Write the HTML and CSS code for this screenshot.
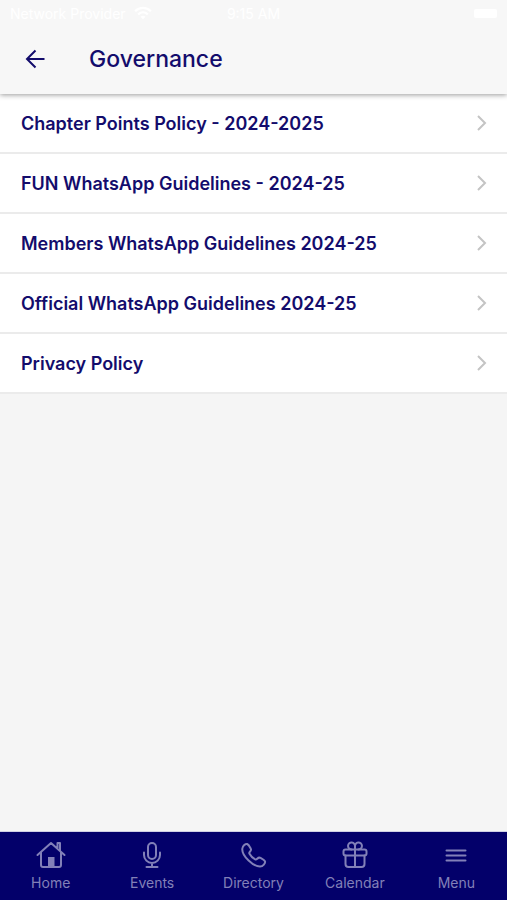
FILE: index.html
```
<!DOCTYPE html>
<html lang="en">

<head>
  <meta charset="UTF-8" />
  <meta name="viewport" content="width=device-width, initial-scale=1.0" />
  <title>Governance</title>
  <link rel="stylesheet" href="styles.css">
</head>

<body>
  <header class="header">
    <div class="status">
      <div class="carrier">
        <span>Network Provider</span>
        <svg width="18" height="14" viewBox="0 0 16 12" fill="none" stroke="currentColor" stroke-width="2">
          <path d="M1 4.5c4-4 10-4 14 0M3.700 7.300c2.500-2.400 6.100-2.400 8.600 0" />
          <path d="M8 11.500 5.800 9.300c1.300-1 3.100-1 4.400 0z" fill="currentColor" stroke="none" />
        </svg>
      </div>
      <span class="time">9:15 AM</span>
      <span class="battery"></span>
    </div>
    <div class="toolbar">
      <button class="back" type="button" aria-label="Back">
        <svg width="20" height="20" viewBox="0 0 20 20">
          <path d="M19.500 10H2M10.500 1.500 2 10l8.500 8.500" />
        </svg>
      </button>
      <h1 class="title">Governance</h1>
    </div>
  </header>

  <main class="content">
    <ul class="list">
      <li>
        <a class="item" href="#">
          <span>Chapter Points Policy - 2024-2025</span>
          <svg class="chevron" width="10" height="16" viewBox="0 0 10 16"><path d="M1 1 8 8l-7 7" /></svg>
        </a>
      </li>
      <li>
        <a class="item" href="#">
          <span>FUN WhatsApp Guidelines - 2024-25</span>
          <svg class="chevron" width="10" height="16" viewBox="0 0 10 16"><path d="M1 1 8 8l-7 7" /></svg>
        </a>
      </li>
      <li>
        <a class="item" href="#">
          <span>Members WhatsApp Guidelines 2024-25</span>
          <svg class="chevron" width="10" height="16" viewBox="0 0 10 16"><path d="M1 1 8 8l-7 7" /></svg>
        </a>
      </li>
      <li>
        <a class="item" href="#">
          <span>Official WhatsApp Guidelines 2024-25</span>
          <svg class="chevron" width="10" height="16" viewBox="0 0 10 16"><path d="M1 1 8 8l-7 7" /></svg>
        </a>
      </li>
      <li>
        <a class="item" href="#">
          <span>Privacy Policy</span>
          <svg class="chevron" width="10" height="16" viewBox="0 0 10 16"><path d="M1 1 8 8l-7 7" /></svg>
        </a>
      </li>
    </ul>
  </main>

  <nav class="tabs">
    <a class="tab" href="#">
      <svg width="30" height="28" viewBox="0 0 30 28">
        <path d="M1.500 14 15 2l13.500 12M5 11.500V24q0 2 2 2h16q2 0 2-2V11.500M21.500 7V2H24v7.500" />
        <path class="solid" d="M12 16h6.500v10H12z" />
      </svg>
      <span>Home</span>
    </a>
    <a class="tab" href="#">
      <svg width="30" height="28" viewBox="0 0 30 28">
        <rect x="11" y="2" width="8" height="16" rx="4" />
        <path d="M7 11.500V14a8 8 0 0 0 16 0v-2.500M15 22v4M9.500 26h11" />
      </svg>
      <span>Events</span>
    </a>
    <a class="tab" href="#">
      <svg width="30" height="28" viewBox="0 0 30 28">
        <path d="M26 20.400c-.3-.9-3.400-2.900-4.500-3.500-1.500-.8-2.200-.2-3.300.9-.8.800-1.200 1-2 .5-2.100-1.100-4.700-3.700-5.700-5.600-.5-.9-.4-1.200.4-2 1.100-1.100 1.700-1.800.8-3.300-.6-1.100-2.400-3.900-3.500-4.400C6.700 2.500 3.500 4.700 3.300 7.800 3 11.500 6.200 16.300 9.600 19.500c3.500 3.400 7.600 6.100 11.500 6 2.900-.1 5.500-3.300 4.900-5.100z" />
      </svg>
      <span>Directory</span>
    </a>
    <a class="tab" href="#">
      <svg width="30" height="28" viewBox="0 0 30 28">
        <rect x="3.500" y="8.500" width="23" height="6" rx="2" />
        <path d="M5.500 14.500V23q0 3 3 3h13q3 0 3-3v-8.500M15 8.500V26" />
        <path d="M15 8.500V5.500a3.500 3.500 0 1 0-3.500 3M15 8.500V5.500a3.500 3.500 0 1 1 3.500 3" />
      </svg>
      <span>Calendar</span>
    </a>
    <a class="tab" href="#">
      <svg width="30" height="28" viewBox="0 0 30 28">
        <path d="M5.500 9.500h19M5.500 14.500h19M5.500 19.500h19" />
      </svg>
      <span>Menu</span>
    </a>
  </nav>
</body>

</html>
```
FILE: styles.css
```
* {
  box-sizing: border-box;
}

body {
  margin: 0;
  min-height: 100vh;
  display: flex;
  flex-direction: column;
  font-family: Inter, "Liberation Sans", sans-serif;
  color: #130c6c;
  background-color: #f5f5f5;
}

.header {
  position: relative;
  background-color: #f7f7f7;
  box-shadow: 0 1px 5px rgba(0, 0, 0, 0.4);
}

.status {
  height: 26px;
  padding: 0 10px;
  display: grid;
  grid-template-columns: 1fr auto 1fr;
  align-items: center;
  font-size: 14px;
  color: #fff;
}

.carrier {
  display: flex;
  align-items: center;
  gap: 8px;
}

.battery {
  width: 23px;
  height: 9px;
  border-radius: 2px;
  justify-self: end;
  background-color: #fff;
}

.toolbar {
  height: 66px;
  margin-bottom: 2px;
  padding: 0 25px;
  display: flex;
  align-items: center;
  gap: 44px;
}

.back {
  padding: 0;
  border: 0;
  display: flex;
  color: inherit;
  background: none;
}

.back svg {
  fill: none;
  stroke: currentColor;
  stroke-width: 2;
}

.title {
  margin: 0;
  font-size: 23px;
  font-weight: 500;
}

.content {
  flex: 1;
}

.list {
  margin: 0;
  padding: 0;
  list-style: none;
}

.item {
  height: 60px;
  padding: 0 20px 0 21px;
  display: flex;
  align-items: center;
  justify-content: space-between;
  font-size: 18px;
  font-weight: 600;
  color: inherit;
  text-decoration: none;
  background-color: #fff;
  border-bottom: 2px solid #ebebeb;
}

.chevron {
  fill: none;
  stroke: #c4c4c4;
  stroke-width: 2;
}

.tabs {
  padding: 9px 0 8px;
  display: flex;
  background-color: #03006a;
  border-top: 1px solid #d0d0e4;
}

.tab {
  flex: 1;
  display: flex;
  flex-direction: column;
  align-items: center;
  gap: 5px;
  font-size: 14px;
  line-height: 18px;
  color: #8280b8;
  text-decoration: none;
}

.tab svg {
  fill: none;
  stroke: currentColor;
  stroke-width: 2;
  stroke-linecap: round;
  stroke-linejoin: round;
}

.tab .solid {
  fill: currentColor;
  stroke: none;
}
```
